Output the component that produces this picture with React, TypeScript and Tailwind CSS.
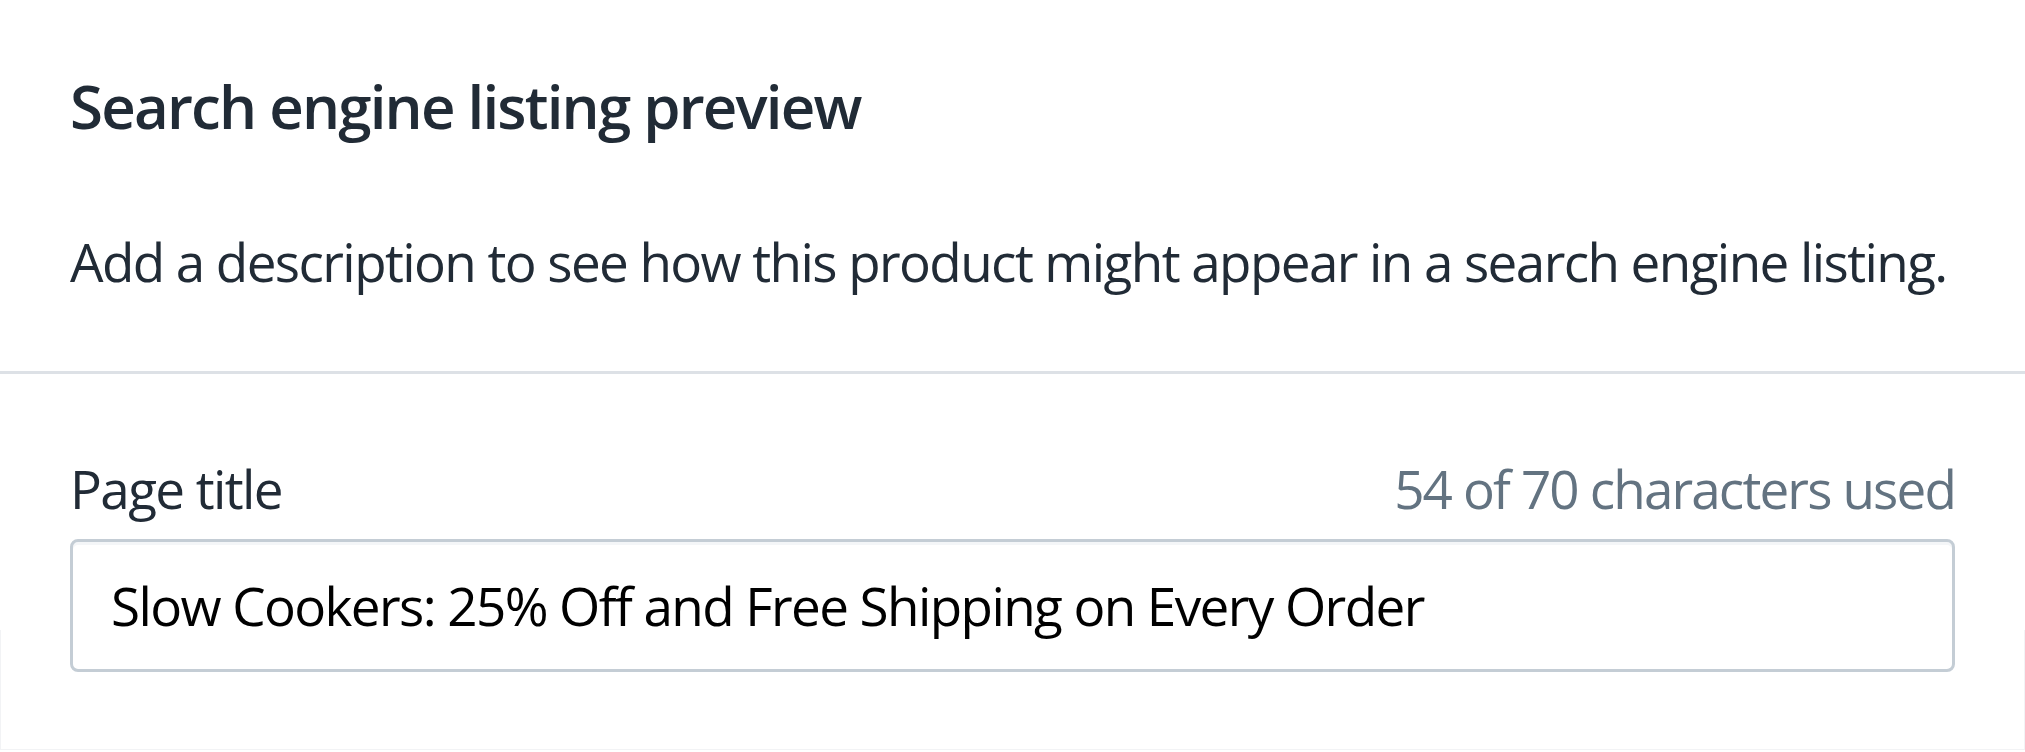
export default function App() {
  const title = 'Slow Cookers: 25% Off and Free Shipping on Every Order';

  return (
    <div className="relative min-h-[752px] w-full bg-white font-['Open_Sans',sans-serif] text-[#212b36] [font-variant-ligatures:none]">
      <div className="px-[70px] pt-[64px] pb-[71px]">
        <h2 className="text-[60px] font-semibold leading-[84px] tracking-[-0.03em]">
          Search engine listing preview
        </h2>
        <p className="mt-[76px] whitespace-nowrap text-[53px] leading-[76px] tracking-[-0.03em]">
          Add a description to see how this product might appear in a search
          engine listing.
        </p>
      </div>
      <div className="h-[3px] bg-[#dde1e6]" />
      <div className="px-[70px] pt-[77px]">
        <div className="flex items-baseline justify-between text-[53px] leading-[76px] tracking-[-0.03em]">
          <span>Page title</span>
          <span className="tracking-[-0.035em] text-[#637381]">54 of 70 characters used</span>
        </div>
        <div className="mt-[12px] flex h-[133px] items-center rounded-[8px] border-[3px] border-[#c4cdd5] px-[38px] shadow-[inset_0_3px_0_0_#f4f6f8]">
          <span className="text-[53px] tracking-[-0.03em] text-black">{title}</span>
        </div>
      </div>
      <div className="pointer-events-none absolute inset-x-0 bottom-[2px] top-[630px] border-x border-b border-[#f2f3f5]" />
    </div>
  );
}
